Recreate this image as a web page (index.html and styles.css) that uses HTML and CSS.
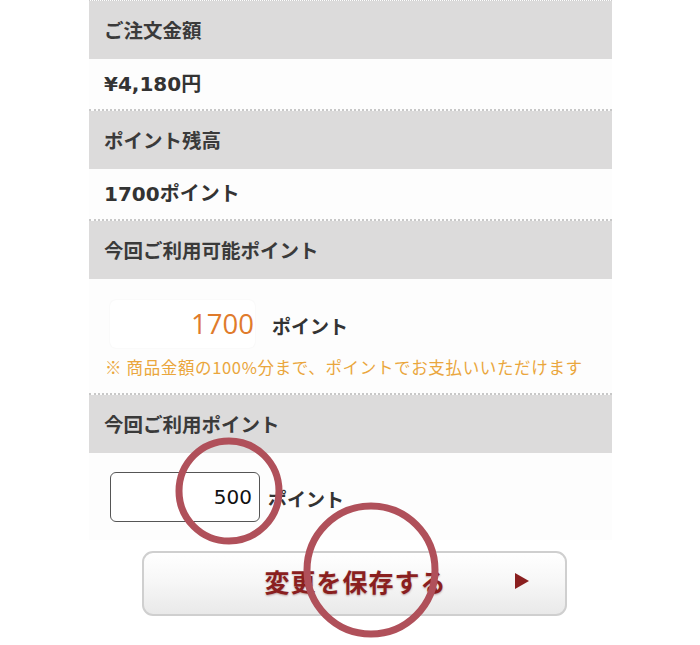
FILE: index.html
```html
<!DOCTYPE html>
<html lang="ja">
<head>
  <meta charset="UTF-8" />
  <meta name="viewport" content="width=device-width, initial-scale=1.0"/>
  <title>ポイント利用</title>
  <link rel="stylesheet" href="styles.css">
</head>
<body>
  <div class="panel">
    <div class="head">ご注文金額</div>
    <div class="val">¥4,180円</div>

    <div class="head">ポイント残高</div>
    <div class="val">1700ポイント</div>

    <div class="head">今回ご利用可能ポイント</div>
    <div class="body avail">
      <div class="line">
        <div class="pbox">1700</div>
        <span class="unit">ポイント</span>
      </div>
      <p class="note">※ 商品金額の100%分まで、ポイントでお支払いいただけます</p>
    </div>

    <div class="head">今回ご利用ポイント</div>
    <div class="body use">
      <div class="line">
        <input type="text" class="pinput" value="500"/>
        <span class="unit">ポイント</span>
      </div>
    </div>
  </div>

  <button class="save">変更を保存する<span class="arrow"></span></button>

  <svg class="marks" width="700" height="645" viewBox="0 0 700 645">
    <circle cx="229" cy="491" r="50" />
    <circle cx="371" cy="570" r="64" />
  </svg>
</body>
</html>
```

FILE: styles.css
```css
body {
  margin: 0;
  background: #fff;
  font-family: "Noto Sans CJK JP", "Noto Sans", sans-serif;
  color: #333;
  position: relative;
  width: 700px;
  height: 645px;
  overflow: hidden;
}
.panel {
  width: 523px;
  margin-left: 89px;
  border-top: 1px dotted #ccc;
}
.head {
  background: #dcdbdb;
  height: 58px;
  line-height: 58px;
  padding-left: 15px;
  font-size: 19.5px;
  font-weight: bold;
  color: #3a3a3a;
}
.val {
  background: #fdfdfd;
  height: 50px;
  line-height: 50px;
  padding-left: 15px;
  font-family: "DejaVu Sans", "Noto Sans CJK JP", sans-serif;
  font-size: 20px;
  font-weight: bold;
  color: #333;
  border-bottom: 2px dotted #c8c8c8;
}
.body {
  background: #fdfdfd;
}
.avail {
  height: 116px;
  padding: 21px 0 0 21px;
  box-sizing: border-box;
  border-bottom: 2px dotted #c8c8c8;
}
.use {
  height: 87px;
  padding: 19px 0 0 21px;
  box-sizing: border-box;
}
.line {
  display: flex;
  align-items: center;
}
.pbox {
  width: 145px;
  height: 48px;
  box-sizing: border-box;
  background: #fff;
  border-radius: 6px;
  box-shadow: 0 0 2px rgba(0,0,0,0.06);
  text-align: right;
  padding-right: 1px;
  line-height: 48px;
  font-family: "Open Sans", "Noto Sans", sans-serif;
  font-size: 27.5px;
  color: #e07b2c;
}
.unit {
  margin-left: 17px;
  font-size: 19px;
  font-weight: bold;
  color: #333;
  padding-top: 2px;
}
.use .unit {
  margin-left: 8px;
}
.note {
  margin: 7px 0 0 -5px;
  font-size: 16.5px;
  color: #eaa63c;
  letter-spacing: 0.65px;
  white-space: nowrap;
}
.pinput {
  width: 150px;
  height: 50px;
  box-sizing: border-box;
  border: 1.5px solid #555;
  border-radius: 6px;
  background: #fff;
  text-align: right;
  padding-right: 7px;
  font-family: "DejaVu Sans", sans-serif;
  font-size: 20px;
  color: #111;
}
.save {
  display: block;
  position: relative;
  width: 425px;
  height: 65px;
  margin: 11px 0 0 142px;
  border: 2px solid #cfcfcf;
  border-radius: 11px;
  background: linear-gradient(#ffffff 0%, #f7f7f7 45%, #e9e9e9 100%);
  font-family: "Noto Sans CJK JP", sans-serif;
  font-size: 25px;
  font-weight: bold;
  color: #8a1f1f;
  text-shadow: 0 1px 2px rgba(90,0,0,0.35);
  letter-spacing: 1px;
  padding: 0 0 5px 2px;
}
.arrow {
  position: absolute;
  right: 36px;
  top: 20px;
  width: 0;
  height: 0;
  border-top: 8px solid transparent;
  border-bottom: 8px solid transparent;
  border-left: 14px solid #8a1f1f;
}
.marks {
  position: absolute;
  left: 0;
  top: 0;
  pointer-events: none;
}
.marks circle {
  fill: none;
  stroke: #b0505a;
  stroke-width: 7;
}
```
